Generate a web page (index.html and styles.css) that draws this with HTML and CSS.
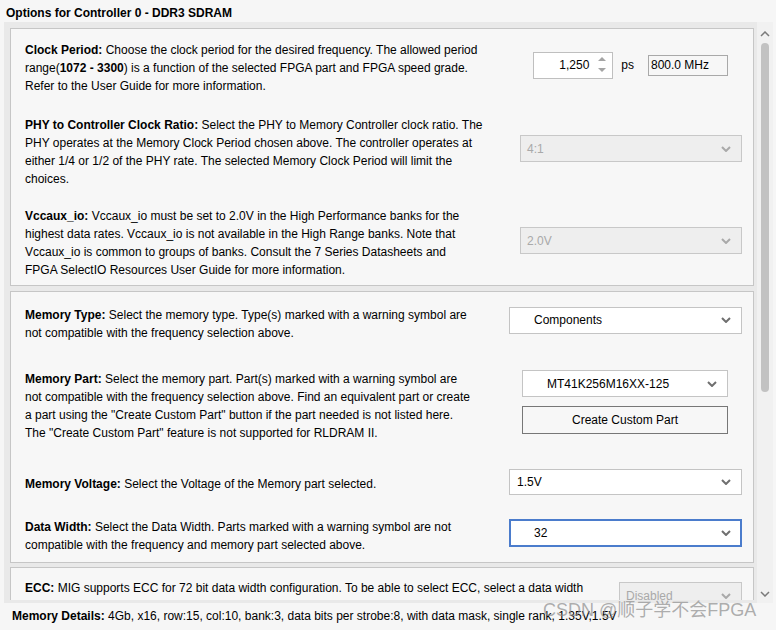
FILE: index.html
```html
<!DOCTYPE html>
<html>
<head>
<meta charset="utf-8">
<link rel="stylesheet" href="styles.css">
</head>
<body>
<div class="title">Options for Controller 0 - DDR3 SDRAM</div>
<div class="frame">
  <div class="viewport">
    <div class="sections">
      <section class="section s1">
        <div class="row">
          <p class="desc"><b>Clock Period:</b> Choose the clock period for the desired frequency. The allowed period<br>range(<b>1072 - 3300</b>) is a function of the selected FPGA part and FPGA speed grade.<br>Refer to the User Guide for more information.</p>
          <div class="ctl ctl-clock">
            <div class="spinner">
              <span class="spin-val">1,250</span>
              <svg class="spin-arrows" width="8" height="18" viewBox="0 0 8 18"><polygon points="0,5 4,1 8,5" fill="#a4a4a4"/><polygon points="0,12 4,16 8,12" fill="#a4a4a4"/></svg>
            </div>
            <span class="unit">ps</span>
            <div class="field">800.0 MHz</div>
          </div>
        </div>
        <div class="row">
          <p class="desc"><b>PHY to Controller Clock Ratio:</b> Select the PHY to Memory Controller clock ratio. The<br>PHY operates at the Memory Clock Period chosen above. The controller operates at<br>either 1/4 or 1/2 of the PHY rate. The selected Memory Clock Period will limit the<br>choices.</p>
          <div class="ctl lift7">
            <div class="combo disabled w222"><span>4:1</span><svg class="chev" width="10" height="6" viewBox="0 0 10 6"><path d="M1 1 L5 5 L9 1" fill="none" stroke="currentColor" stroke-width="2"/></svg></div>
          </div>
        </div>
        <div class="row row-vcc">
          <p class="desc"><b>Vccaux_io:</b> Vccaux_io must be set to 2.0V in the High Performance banks for the<br>highest data rates. Vccaux_io is not available in the High Range banks. Note that<br>Vccaux_io is common to groups of banks. Consult the 7 Series Datasheets and<br>FPGA SelectIO Resources User Guide for more information.</p>
          <div class="ctl lift5">
            <div class="combo disabled w222"><span>2.0V</span><svg class="chev" width="10" height="6" viewBox="0 0 10 6"><path d="M1 1 L5 5 L9 1" fill="none" stroke="currentColor" stroke-width="2"/></svg></div>
          </div>
        </div>
      </section>

      <section class="section s2">
        <div class="row">
          <p class="desc"><b>Memory Type:</b> Select the memory type. Type(s) marked with a warning symbol are<br>not compatible with the frequency selection above.</p>
          <div class="ctl lift8">
            <div class="combo w233 pad-icon"><span>Components</span><svg class="chev" width="10" height="6" viewBox="0 0 10 6"><path d="M1 1 L5 5 L9 1" fill="none" stroke="currentColor" stroke-width="2"/></svg></div>
          </div>
        </div>
        <div class="row">
          <p class="desc"><b>Memory Part:</b> Select the memory part. Part(s) marked with a warning symbol are<br>not compatible with the frequency selection above. Find an equivalent part or create<br>a part using the "Create Custom Part" button if the part needed is not listed here.<br>The "Create Custom Part" feature is not supported for RLDRAM II.</p>
          <div class="ctl ctl-part">
            <div class="combo w206 pad-icon"><span>MT41K256M16XX-125</span><svg class="chev" width="10" height="6" viewBox="0 0 10 6"><path d="M1 1 L5 5 L9 1" fill="none" stroke="currentColor" stroke-width="2"/></svg></div>
            <div class="button">Create Custom Part</div>
          </div>
        </div>
        <div class="row row-top row-volt">
          <p class="desc desc-volt"><b>Memory Voltage:</b> Select the Voltage of the Memory part selected.</p>
          <div class="ctl">
            <div class="combo w233 pad-small"><span>1.5V</span><svg class="chev" width="10" height="6" viewBox="0 0 10 6"><path d="M1 1 L5 5 L9 1" fill="none" stroke="currentColor" stroke-width="2"/></svg></div>
          </div>
        </div>
        <div class="row row-width">
          <p class="desc"><b>Data Width:</b> Select the Data Width. Parts marked with a warning symbol are not<br>compatible with the frequency and memory part selected above.</p>
          <div class="ctl lift7">
            <div class="combo w233 focused"><span>32</span><svg class="chev" width="10" height="6" viewBox="0 0 10 6"><path d="M1 1 L5 5 L9 1" fill="none" stroke="currentColor" stroke-width="2"/></svg></div>
          </div>
        </div>
      </section>

      <section class="section s3">
        <div class="row row-top">
          <p class="desc"><b>ECC:</b> MIG supports ECC for 72 bit data width configuration. To be able to select ECC, select a data width</p>
          <div class="ctl ctl-ecc">
            <div class="combo disabled w123"><span>Disabled</span><svg class="chev" width="10" height="6" viewBox="0 0 10 6"><path d="M1 1 L5 5 L9 1" fill="none" stroke="currentColor" stroke-width="2"/></svg></div>
          </div>
        </div>
      </section>
    </div>
  </div>
  <div class="scrollbar">
    <svg class="sb-arrow" width="10" height="6" viewBox="0 0 10 6"><path d="M1 5 L5 1 L9 5" fill="none" stroke="#7a7a7a" stroke-width="1.5"/></svg>
    <div class="thumb"></div>
    <div class="sb-space"></div>
    <svg class="sb-arrow" width="10" height="6" viewBox="0 0 10 6"><path d="M1 1 L5 5 L9 1" fill="none" stroke="#7a7a7a" stroke-width="1.5"/></svg>
  </div>
</div>
<div class="details"><b>Memory Details:</b> 4Gb, x16, row:15, col:10, bank:3, data bits per strobe:8, with data mask, single rank, 1.35V,1.5V</div>
<div class="watermark">CSDN @顺子学不会FPGA</div>
</body>
</html>
```
FILE: styles.css
```css
* { box-sizing: border-box; }
html, body { margin: 0; }
body {
  background: #f6f6f6;
  font-family: "Liberation Sans", Arial, sans-serif;
  font-size: 12px;
  color: #000;
  width: 776px;
  height: 630px;
  overflow: hidden;
  position: relative;
}
b { font-weight: bold; }

.title {
  font-weight: bold;
  line-height: 18px;
  height: 22px;
  padding: 4px 6px 0;
}

.frame {
  display: flex;
  margin-left: 4px;
  width: 769px;
  height: 581px;
  background: #e9e9e9;
}
.viewport {
  width: 744px;
  margin-left: 6px;
  padding-top: 6px;
  height: 578px;
  overflow: hidden;
}
.sections {
  display: flex;
  flex-direction: column;
  gap: 5px;
}
.section {
  border: 1px solid #c6c6c6;
  background: #f7f7f7;
  padding: 12px 11px 6px 14px;
  display: flex;
  flex-direction: column;
}
.s1 { gap: 21px; }
.row-vcc { margin-top: -2px; }
.s2 { gap: 28px; padding-top: 14px; padding-bottom: 8px; }
.row-volt { margin-top: -1px; }
.row-width { margin-top: -5px; }
.s3 { margin-top: -1px; padding-top: 11px; }

.row {
  display: flex;
  align-items: center;
}
.row-top { align-items: flex-start; }
.desc {
  margin: 0;
  flex: 1;
  min-width: 0;
  line-height: 18px;
  white-space: nowrap;
}
.desc-volt { margin-top: 6px; }
.ctl {
  display: flex;
  align-items: center;
}
.lift5 { margin-bottom: 5px; }
.lift7 { margin-bottom: 7px; }
.lift8 { margin-bottom: 8px; }
.ctl-ecc { margin-top: 3px; }
.ctl-clock { margin-right: 14px; margin-bottom: 6px; }
.ctl-part {
  flex-direction: column;
  gap: 9px;
  margin-right: 14px;
  margin-bottom: 8px;
}

.spinner {
  width: 80px;
  height: 27px;
  border: 1px solid #bfbfbf;
  background: #fff;
  display: flex;
  align-items: center;
}
.spin-val {
  flex: 1;
  text-align: right;
  padding-right: 6px;
}
.spin-arrows {
  margin-right: 6px;
  margin-left: 3px;
}
.unit { margin-left: 8px; }
.field {
  margin-left: 14px;
  width: 80px;
  height: 21px;
  border: 1px solid #a9a9a9;
  padding-left: 2px;
  line-height: 19px;
}

.combo {
  height: 27px;
  border: 1px solid #c4c4c4;
  background: #fff;
  display: flex;
  align-items: center;
  padding-left: 6px;
  padding-right: 10px;
  color: #000;
}
.combo span { flex: 1; }
.combo .chev { color: #6f6f6f; }
.combo.disabled {
  background: #eeeeee;
  border-color: #c8c8c8;
  color: #a9a9a9;
}
.combo.disabled .chev { color: #a9a9a9; }
.combo.pad-icon { padding-left: 24px; }
.combo.pad-small { padding-left: 7px; height: 26px; }
.combo.focused {
  border: 2px solid #4b7ccc;
  padding-left: 23px;
  padding-right: 9px;
  height: 28px;
}
.w222 { width: 222px; }
.w233 { width: 233px; }
.w206 { width: 206px; }
.w123 { width: 123px; }

.button {
  width: 206px;
  height: 28px;
  border: 1px solid #777;
  background: #f7f7f7;
  display: flex;
  align-items: center;
  justify-content: center;
}

.scrollbar {
  width: 16px;
  margin-left: 3px;
  background: #f1f1f1;
  display: flex;
  flex-direction: column;
  align-items: center;
  padding-top: 9px;
  padding-bottom: 6px;
}
.thumb {
  width: 8px;
  height: 349px;
  margin-top: 6px;
  border-radius: 4px;
  background: #c2c2c2;
}
.sb-space { flex: 1; }

.details {
  padding-left: 12px;
  margin-top: 4px;
  line-height: 18px;
  white-space: nowrap;
}

.watermark {
  position: absolute;
  left: 543px;
  top: 599px;
  font-family: "Liberation Sans", "Noto Sans CJK SC", sans-serif;
  font-size: 18px;
  line-height: 22px;
  color: rgba(140, 140, 140, 0.7);
  white-space: nowrap;
}
```
